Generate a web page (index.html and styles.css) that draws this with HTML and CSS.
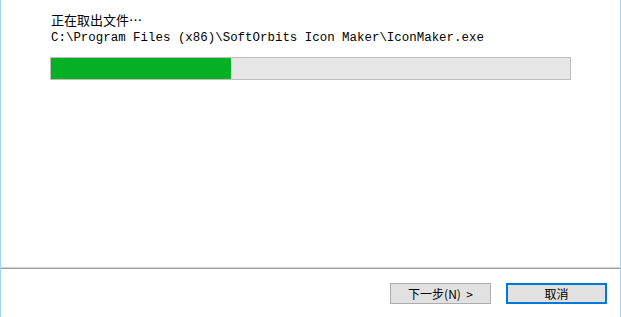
FILE: index.html
```html
<!DOCTYPE html>
<html lang="zh-CN">
<head>
    <meta charset="UTF-8">
    <title>安装 - SoftOrbits Icon Maker</title>
    <link rel="stylesheet" href="styles.css">
</head>
<body>
    <div class="wizard">
        <div class="wizard-body">
            <div class="status-label">正在取出文件…</div>
            <div class="file-label">C:\Program Files (x86)\SoftOrbits Icon Maker\IconMaker.exe</div>
            <div class="progress">
                <div class="progress-fill" style="width: 34.6%"></div>
            </div>
        </div>
        <div class="separator"></div>
        <div class="wizard-buttons">
            <button class="win-button">下一步(N)&nbsp; &gt;</button>
            <button class="win-button default-button">取消</button>
        </div>
    </div>
</body>
</html>
```

FILE: styles.css
```css
/* installer wizard page */
:root {
    --frame-color: #a9d3f5;
    --border-color: #bcbcbc;
    --track-color: #e6e6e6;
    --fill-color: #06b025;
    --focus-color: #0078d7;
}

body {
    margin: 0;
    background: #ffffff;
    font-family: "Noto Sans CJK SC", "Liberation Sans", sans-serif;
    font-size: 12px;
    color: #000000;
}

.wizard {
    height: 317px;
    border-left: 1px solid var(--frame-color);
    border-right: 1px solid var(--frame-color);
    box-sizing: border-box;
    display: flex;
    flex-direction: column;
}

.wizard-body {
    flex: 1;
    padding: 10px 49px 0 49px;
}

.status-label {
    font-size: 13px;
    line-height: 19px;
    padding-left: 1px;
}

.file-label {
    font-family: "Liberation Mono", monospace;
    font-size: 12.45px;
    line-height: 18px;
    padding-left: 1px;
    white-space: nowrap;
}

.progress {
    margin-top: 10px;
    width: 521px;
    height: 23px;
    box-sizing: border-box;
    border: 1px solid var(--border-color);
    background: var(--track-color);
}

.progress-fill {
    height: 100%;
    background: var(--fill-color);
}

/* line above the buttons */
.separator {
    height: 0;
    border-top: 1px solid #d4d4d4;
    border-bottom: 1px solid #a0a0a0;
}

.wizard-buttons {
    height: 48px;
    display: flex;
    justify-content: flex-end;
    align-items: flex-start;
    padding: 14px 13px 0 0;
    gap: 15px;
    box-sizing: border-box;
}

.win-button {
    width: 101px;
    height: 21px;
    padding: 0;
    margin: 0;
    font-family: "Noto Sans CJK SC", sans-serif;
    font-size: 12px;
    line-height: 19px;
    color: #000000;
    background: #e1e1e1;
    border: 1px solid #adadad;
    box-sizing: border-box;
}

.default-button {
    border: 2px solid var(--focus-color);
    line-height: 17px;
}
```
